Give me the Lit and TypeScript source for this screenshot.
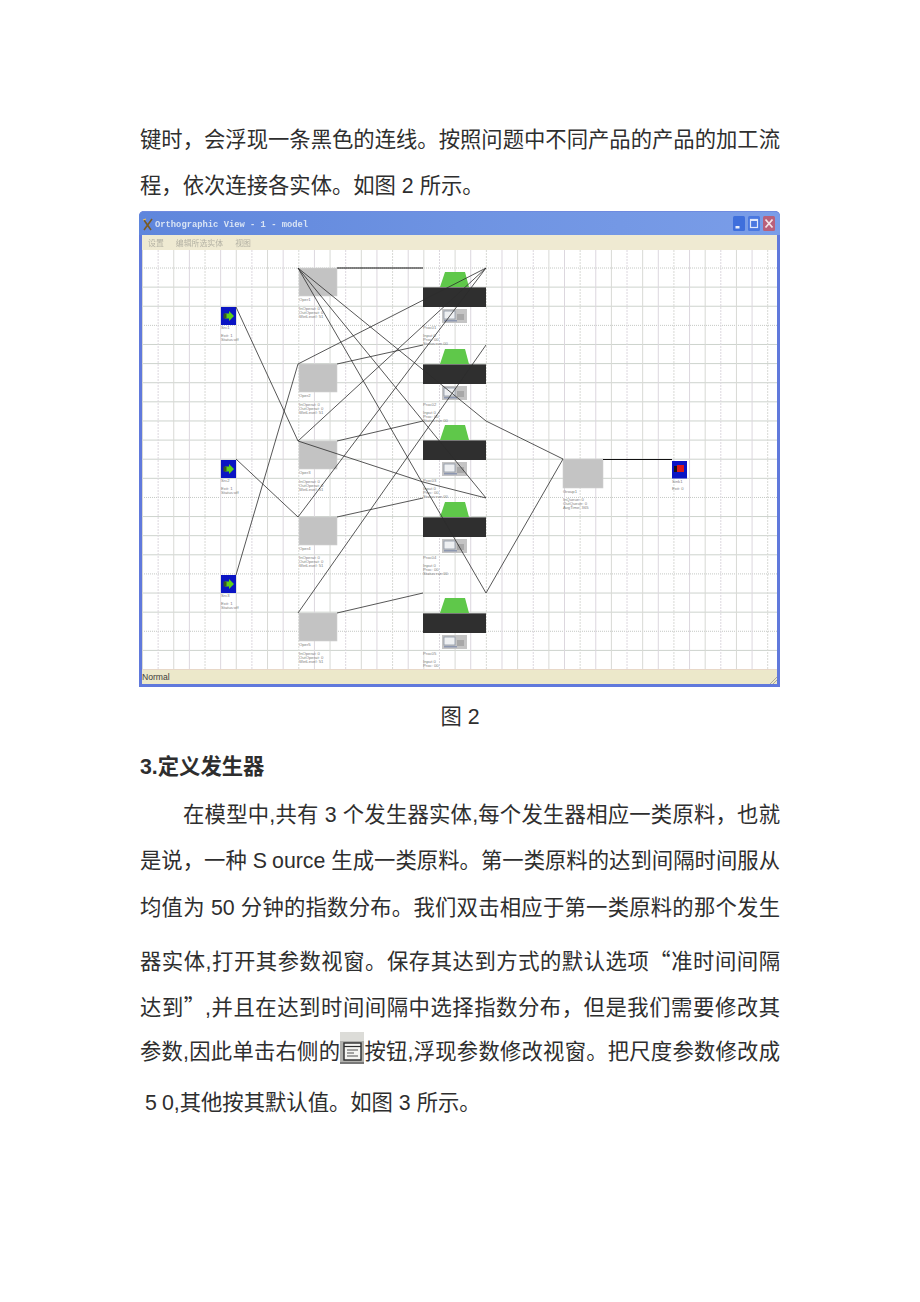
import { LitElement, html, css, svg } from "lit";
import { customElement } from "lit/decorators.js";

const H = Array.from({ length: 21 }, (_, i) => 268 + i * 19.12);
const V = Array.from({ length: 41 }, (_, i) => 142.5 + i * 15.63);
const DOTTED = new Set([0, 3, 12, 16, 19]);

const LINES: number[][] = [
  [236, 307, 298, 441], [236, 459, 298, 517], [236, 575, 298, 364],
  [298, 364, 486, 268], [298, 441, 486, 268], [298, 517, 486, 268], [298, 613, 486, 345],
  [298, 268, 486, 593], [298, 268, 486, 421], [298, 268, 486, 498],
  [486, 421, 563, 459], [486, 593, 563, 459],
  [298, 441, 423, 482], [423, 482, 486, 498],
  [337, 364, 423, 345], [337, 441, 423, 421], [337, 517, 423, 498], [337, 613, 423, 593],
];
const THICK: number[][] = [[337, 268, 423, 268], [603, 459.5, 672, 459.5]];

const SRC: [number, number, string, string][] = [
  [307, 18, "Src1", "Status:off"], [460, 18, "Src2", "Status:off"], [575, 18, "Src3", "Status:off"],
];
const OPS: [number, string][] = [[268, "Oper1"], [364, "Oper2"], [441, "Oper3"], [517, "Oper4"], [613, "Oper5"]];
const MACH: [number, string, string[]][] = [
  [287, "Proc01", ["Input 0", "Proc: 00", "Status:run 00"]],
  [364, "Proc02", ["Input 0", "Proc: 00", "Status:run 00"]],
  [440, "Proc03", ["Input 0", "Proc: 00", "Status:run 00"]],
  [517, "Proc04", ["Input 0", "Proc: 00", "Status:run 00"]],
  [613, "Proc05", ["Input 0", "Proc: 00"]],
];

const label = (x: number, y: number, lines: string[], first = 5.4) =>
  lines.map((t, i) => svg`<text class="lbl" x=${x} y=${y + (i === 0 ? 0 : first + (i - 1) * 4.4)}>${t}</text>`);

@customElement("app-root")
export class AppRoot extends LitElement {
  static styles = css`
    :host { display: block; height: 1302px; background: #fff; overflow: hidden;
      font-family: "Liberation Sans", "Noto Sans CJK SC", sans-serif; color: #2e2e2e; }
    .page { width: 640px; padding: 117px 140px 0; }
    .line { height: 46px; line-height: 46px; font-size: 21.33px; white-space: nowrap; }
    .just { text-align: justify; text-align-last: justify; }
    .indent { padding-left: 43px; }
    .cjk { font-family: "Noto Sans CJK SC", sans-serif; }
    .wide { letter-spacing: 5px; }
    .caption { text-align: center; margin-top: 7px; }
    .head { margin-top: 4px; font-weight: 700; }
    .m2 { margin-top: 2px; }
    .m1 { margin-top: 1px; }
    .m6 { margin-top: 6px; }
    .m5 { margin-top: 5px; }
    .last { padding-left: 5px; }
    .ico { display: inline-block; width: 24px; height: 32px; vertical-align: -5px; }

    .win { margin: 2px 0 0 -1px; width: 641px; height: 476px; box-sizing: border-box; background: #6079dc;
      border-radius: 5px 5px 0 0; padding: 0 3px 3px; display: flex; flex-direction: column; }
    .title { height: 24px; flex: none; margin: 0 -3px; padding: 2px 4px 0 3px; box-sizing: border-box;
      border-radius: 5px 5px 0 0; border-top: 1px solid #6f8be0;
      background: linear-gradient(90deg, #5f86dc 0%, #6e93e2 50%, #7a9de8 100%);
      display: flex; align-items: center; gap: 1px; }
    .logo { width: 12px; height: 14px; flex: none; }
    .ttl { font-family: "Liberation Mono", monospace; font-size: 8.8px; font-weight: 700; color: #d9e4f4;
      flex: 1; white-space: nowrap; filter: blur(0.3px); }
    .btns { display: flex; gap: 3px; padding-right: 1px; margin-top: -2px; }
    .btn { width: 12px; height: 15px; display: block; }
    .menu { height: 15px; flex: none; background: #efead2; display: flex; align-items: center; gap: 12px;
      padding-left: 6px; font-size: 7.9px; color: #b4b2a4; filter: blur(0.25px); }
    .canvas { height: 419px; flex: none; background: #fff; }
    .canvas svg { display: block; width: 100%; height: 100%; }
    .lbl { font-family: "Liberation Sans", sans-serif; font-size: 4.2px; fill: #808080; }
    .status { height: 15px; flex: none; background: #ece8ca; display: flex; align-items: center; justify-content: space-between;
      font-size: 8.6px; color: #3c3c3c; padding-left: 0; border-top: 1px solid #e8d8c8; box-sizing: border-box; }
    .grip { width: 8px; height: 8px; align-self: flex-end; }
  `;

  private diagram() {
    return svg`
      <svg viewBox="142 250 635 419" aria-label="model diagram">
        ${H.map((y, i) => svg`<line x1="142" x2="777" y1=${y} y2=${y} stroke=${DOTTED.has(i) ? "#c4c8c4" : "#cdd3cd"}
          stroke-width="1" stroke-dasharray=${DOTTED.has(i) ? "1 1" : "none"} />`)}
        ${V.map((x, i) => svg`<line y1="250" y2="669" x1=${x} x2=${x} stroke=${i % 2 ? "#dcd7de" : "#d8d9d5"}
          stroke-width="1" stroke-dasharray=${i % 3 === 1 ? "2 1" : "none"} />`)}

        ${OPS.map(([y, n]) => svg`
          <rect x="299" y=${y} width="38" height="28" fill="#c3c3c3" stroke="#cfcfcf" stroke-width=".6" />
          ${label(299, y + 33, [n, "InOperat: 0", "OutOperat: 0", "WetLevel: 51"], 8.6)}
        `)}

        ${MACH.map(([y, n, rows]) => svg`
          <polygon points="${440},${y} ${445},${y - 15} ${465},${y - 15} ${469},${y}" fill="#5fc84a" />
          <rect x="423" y=${y} width="63" height="20" fill="#2f2f2f" />
          <rect x="423" y=${y} width="63" height="1" fill="#777" />
          <rect x="442" y=${y + 22} width="25" height="14" fill="#c4c4c4" />
          <rect x="444" y=${y + 24} width="11" height="8" fill="#eef0f2" stroke="#8d97a6" stroke-width=".8" />
          <rect x="444" y=${y + 33} width="13" height="1.5" fill="#8d97b0" />
          <rect x="457" y=${y + 27} width="7" height="6" fill="#a8a8a8" />
          ${label(423, y + 42, [n, ...rows], 7.5)}
        `)}

        <rect x="563" y="459" width="40" height="29" fill="#c4c4c4" stroke="#cfcfcf" stroke-width=".6" />
        ${label(563, 493, ["Group1", "InQueue: 0", "OutQueue: 0", "AvgTime: 365"], 7.6)}

        ${SRC.map(([y, h, n, s]) => svg`
          <rect x="221" y=${y} width="15" height=${h} fill="#0a14c4" />
          <polygon points="${225},${y + 6.5} ${229},${y + 6.5} ${229},${y + 4} ${234},${y + 9} ${229},${y + 14} ${229},${y + 11.5} ${225},${y + 11.5}" fill="#5ed018" />
          <rect x="223.5" y=${y + 6.5} width="3" height="5" fill="#35581f" />
          ${label(221, y + 22, [n, "Exit: 1", s], 7.6)}
        `)}
        <rect x="672" y="461" width="15" height="17.5" fill="#0a14c4" />
        <rect x="674" y="466" width="4" height="6" fill="#181018" />
        <rect x="677" y="465" width="7" height="7" fill="#d81818" />
        ${label(672, 483, ["Sink1", "Exit: 0"], 7.4)}

        ${LINES.map(([a, b, c, d]) => svg`<line x1=${a} y1=${b} x2=${c} y2=${d} stroke="#2c2c2c" stroke-width=".8" />`)}
        ${THICK.map(([a, b, c, d]) => svg`<line x1=${a} y1=${b} x2=${c} y2=${d} stroke="#111" stroke-width="1" />`)}
      </svg>`;
  }

  render() {
    return html`
      <div class="page">
        <div class="line just">键时，会浮现一条黑色的连线。按照问题中不同产品的产品的加工流</div>
        <div class="line">程，依次连接各实体。如图 2 所示。</div>

        <div class="win">
          <div class="title">
            <svg class="logo" viewBox="0 0 12 14">
              <path d="M2 2 L9 12 M10 1 L2 12" stroke="#7a5a20" stroke-width="1.6" fill="none" />
              <path d="M1 2 L4 1" stroke="#e8c060" stroke-width="1.2" />
            </svg>
            <div class="ttl">Orthographic View - 1 - model</div>
            <div class="btns">
              <svg class="btn" viewBox="0 0 12 15">
                <rect width="12" height="15" rx="1.5" fill="#3f6fdc" />
                <rect x="2.5" y="10" width="4" height="2.5" fill="#e8eefc" />
              </svg>
              <svg class="btn" viewBox="0 0 12 15">
                <rect width="12" height="15" rx="1.5" fill="#4a78e0" />
                <rect x="2.5" y="3.5" width="7" height="8" fill="none" stroke="#dfe8fb" stroke-width="1.2" />
                <rect x="2.5" y="3" width="7" height="2" fill="#dfe8fb" />
              </svg>
              <svg class="btn" viewBox="0 0 12 15">
                <rect width="12" height="15" rx="1.5" fill="#b9607a" />
                <path d="M2.5 3.5 L9.5 11.5 M9.5 3.5 L2.5 11.5" stroke="#f4e4e8" stroke-width="1.8" />
              </svg>
            </div>
          </div>
          <div class="menu"><span>设置</span><span>编辑所选实体</span><span>视图</span></div>
          <div class="canvas">${this.diagram()}</div>
          <div class="status">
            <span>Normal</span>
            <svg class="grip" viewBox="0 0 8 8"><path d="M1 8 L8 1 M4 8 L8 4" stroke="#a8a898" stroke-width="1" /></svg>
          </div>
        </div>

        <div class="line caption">图 2</div>
        <div class="line head">3.定义发生器</div>
        <div class="line just indent m2">在模型中,共有 3 个发生器实体,每个发生器相应一类原料，也就</div>
        <div class="line just">是说，一种 <span class="wide">S</span>ource 生成一类原料。第一类原料的达到间隔时间服从</div>
        <div class="line just m1">均值为 50 分钟的指数分布。我们双击相应于第一类原料的那个发生</div>
        <div class="line just m6">器实体,打开其参数视窗。保存其达到方式的默认选项<span class="cjk">“</span>准时间间隔</div>
        <div class="line just">达到<span class="cjk">”</span>,并且在达到时间间隔中选择指数分布，但是我们需要修改其</div>
        <div class="line just">参数,因此单击右侧的<svg class="ico" viewBox="0 0 24 32">
            <rect width="24" height="9" fill="#dcdcd8" />
            <rect y="9" width="24" height="23" fill="#b0b0ac" />
            <rect x="4" y="11" width="17" height="17" fill="#f6f6f2" stroke="#2c2c2c" stroke-width="1.4" />
            <path d="M4 14.5 H21" stroke="#2c2c2c" stroke-width="1.2" />
            <path d="M7 18 H18 M7 21 H14 M7 24 H18" stroke="#505050" stroke-width="1.1" />
            <rect x="0" y="30" width="24" height="2" fill="#787878" />
          </svg>按钮,浮现参数修改视窗。把尺度参数修改成</div>
        <div class="line last m5"><span class="wide">5</span>0,其他按其默认值。如图 3 所示。</div>
      </div>
    `;
  }
}
